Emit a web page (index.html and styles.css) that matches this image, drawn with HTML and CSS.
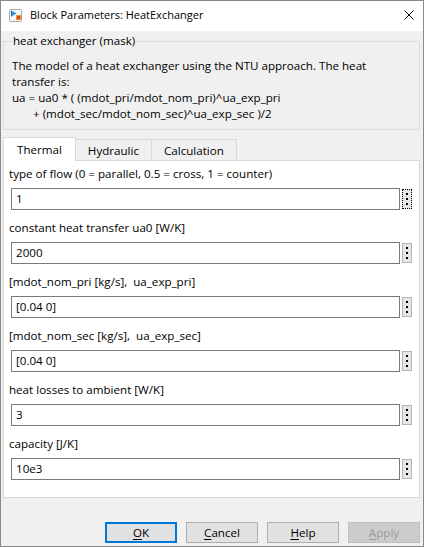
FILE: index.html
```html
<!DOCTYPE html>
<html lang="en">
<head>
<meta charset="utf-8">
<title>Block Parameters: HeatExchanger</title>
<link rel="stylesheet" href="styles.css">
</head>
<body>
<div class="window">
  <div class="titlebar">
    <svg class="app-icon" width="13" height="13" viewBox="0 0 13 13" aria-hidden="true">
      <rect x="0.5" y="0.5" width="12" height="12" rx="1" fill="#f6f6f6" stroke="#a8a8a8"/>
      <path d="M2.5 1.5 V7.5" stroke="#1f6fc0" stroke-width="1"/>
      <path d="M3 2 L7.5 4.5 L3 7 Z" fill="#2f8de4"/>
      <rect x="7.5" y="6.5" width="4" height="4" fill="#e0401a" stroke="#f0962e" stroke-width="1"/>
    </svg>
    <span class="title">Block Parameters: HeatExchanger</span>
    <svg class="close" width="10" height="10" viewBox="0 0 10 10" aria-hidden="true">
      <path d="M0.5 0.5 L9.5 9.5 M9.5 0.5 L0.5 9.5" stroke="#000" stroke-width="1"/>
    </svg>
  </div>

  <div class="content">
    <fieldset class="mask">
      <legend>heat exchanger (mask)</legend>
      <p class="desc">The model of a heat exchanger using the NTU approach. The heat<br>transfer is:<br>ua = ua0 * ( (mdot_pri/mdot_nom_pri)^ua_exp_pri<br><span class="indent">+ (mdot_sec/mdot_nom_sec)^ua_exp_sec )/2</span></p>
    </fieldset>

    <div class="tabs">
      <div class="tab active">Thermal</div>
      <div class="tab">Hydraulic</div>
      <div class="tab">Calculation</div>
    </div>

    <div class="panel">
      <div class="field">
        <div class="label">type of flow (0 = parallel, 0.5 = cross, 1 = counter)</div>
        <div class="row">
          <div class="input">1</div>
          <div class="more focus"><i></i><i></i><i></i></div>
        </div>
      </div>
      <div class="field">
        <div class="label">constant heat transfer ua0 [W/K]</div>
        <div class="row">
          <div class="input">2000</div>
          <div class="more"><i></i><i></i><i></i></div>
        </div>
      </div>
      <div class="field">
        <div class="label">[mdot_nom_pri [kg/s],  ua_exp_pri]</div>
        <div class="row">
          <div class="input">[0.04 0]</div>
          <div class="more"><i></i><i></i><i></i></div>
        </div>
      </div>
      <div class="field">
        <div class="label">[mdot_nom_sec [kg/s],  ua_exp_sec]</div>
        <div class="row">
          <div class="input">[0.04 0]</div>
          <div class="more"><i></i><i></i><i></i></div>
        </div>
      </div>
      <div class="field">
        <div class="label">heat losses to ambient [W/K]</div>
        <div class="row">
          <div class="input">3</div>
          <div class="more"><i></i><i></i><i></i></div>
        </div>
      </div>
      <div class="field">
        <div class="label">capacity [J/K]</div>
        <div class="row">
          <div class="input">10e3</div>
          <div class="more"><i></i><i></i><i></i></div>
        </div>
      </div>
    </div>
  </div>

  <div class="actions">
    <div class="btn default"><u>O</u>K</div>
    <div class="btn"><u>C</u>ancel</div>
    <div class="btn"><u>H</u>elp</div>
    <div class="btn disabled"><u>A</u>pply</div>
  </div>
</div>
</body>
</html>
```

FILE: styles.css
```css
* {
  box-sizing: border-box;
}

html, body {
  margin: 0;
  padding: 0;
}

body {
  width: 424px;
  height: 547px;
  background: #f0f0f0;
  font-family: "Open Sans", "Noto Sans", sans-serif;
  font-size: 11.6px;
  color: #000;
  overflow: hidden;
}

.window {
  width: 424px;
  height: 547px;
  border: 1px solid #8a8a8a;
  background: #f0f0f0;
  display: flex;
  flex-direction: column;
}

/* title bar */
.titlebar {
  height: 30px;
  flex: none;
  background: #fff;
  display: flex;
  align-items: center;
  padding: 0 0 2px 8px;
}

.app-icon {
  flex: none;
  display: block;
}

.title {
  margin-left: 8px;
  line-height: 16px;
  font-size: 11px;
}

.close {
  margin-left: auto;
  margin-right: 9px;
  display: block;
}

/* main content */
.content {
  padding: 2px 3px 0 2px;
}

.mask {
  margin: 0;
  min-width: 0;
  border: 1px solid #dcdcdc;
  padding: 9px 8px 7px 8px;
}

.mask legend {
  padding: 0 1px;
  line-height: 16px;
}

.desc {
  margin: 0;
  line-height: 16px;
  white-space: nowrap;
}

.indent {
  padding-left: 21px;
}

/* tabs */
.tabs {
  display: flex;
  align-items: flex-end;
  height: 24px;
  margin-top: 7px;
  margin-bottom: -1px;
  position: relative;
  z-index: 1;
}

.tab {
  height: 21px;
  margin-bottom: 1px;
  padding: 1px 12px 0;
  border: 1px solid #d9d9d9;
  border-bottom: none;
  background: #f0f0f0;
  display: flex;
  align-items: center;
  line-height: 16px;
}

.tab + .tab {
  border-left: none;
}

.tab.active {
  height: 24px;
  margin-bottom: 0;
  padding: 0 13px;
  background: #fff;
}

.panel {
  background: #fff;
  border: 1px solid #d9d9d9;
  padding: 5px 7px 7px 5px;
}

.field {
  margin-bottom: 10px;
}

.label {
  line-height: 16px;
  margin-bottom: 6px;
  white-space: pre;
}

.row {
  display: flex;
  align-items: center;
  gap: 2px;
  padding-left: 2px;
}

.input {
  flex: 1;
  height: 22px;
  border: 1px solid #7a7a7a;
  background: #fff;
  padding-left: 4px;
  line-height: 20px;
}

.more {
  flex: none;
  width: 10px;
  height: 20px;
  border: 1px solid #b4b4b4;
  background: #e6e6e6;
  display: flex;
  flex-direction: column;
  align-items: center;
  justify-content: center;
  gap: 3px;
}

.more.focus {
  border: 1px dotted #000;
}

.more i {
  display: block;
  width: 2px;
  height: 2px;
  background: #000;
}

/* bottom buttons */
.actions {
  margin-top: auto;
  margin-bottom: 3px;
  padding-right: 3px;
  display: flex;
  justify-content: flex-end;
  gap: 9px;
}

.btn {
  width: 72px;
  height: 21px;
  border: 1px solid #adadad;
  background: #e1e1e1;
  display: flex;
  align-items: center;
  justify-content: center;
  line-height: 16px;
}

.btn.default {
  border: 2px solid #0078d7;
}

.btn.disabled {
  background: #cccccc;
  border-color: #bfbfbf;
  color: #9a9a9a;
}

.btn u {
  text-decoration-thickness: 1px;
  text-underline-offset: 2px;
}
```
